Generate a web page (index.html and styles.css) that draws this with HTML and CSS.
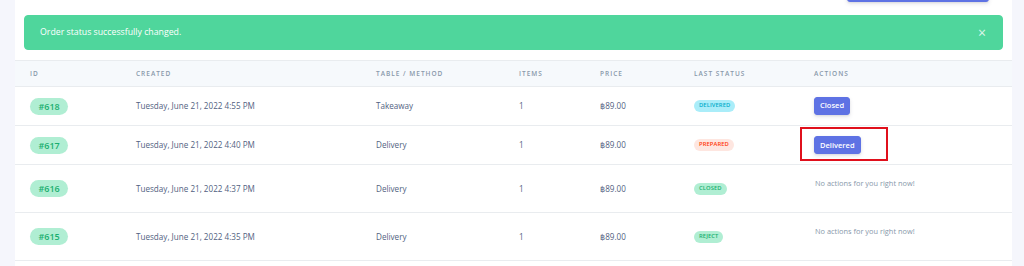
FILE: index.html
```html
<!DOCTYPE html>
<html lang="en">
<head>
    <meta charset="UTF-8">
    <meta name="viewport" content="width=device-width, initial-scale=1.0">
    <title>Orders</title>
    <link rel="stylesheet" href="styles.css">
</head>
<body>

<div class="page">
    <div class="card">
        <!-- Card header (scrolled mostly out of view) -->
        <div class="card-top">
            <button class="btn btn-primary btn-wide" aria-label="New order"></button>
        </div>

        <!-- Flash message -->
        <div class="alert alert-success">
            <span class="alert-text">Order status successfully changed.</span>
            <button class="close" aria-label="Close">&times;</button>
        </div>

        <table class="table">
            <colgroup>
                <col class="col-id">
                <col class="col-created">
                <col class="col-method">
                <col class="col-items">
                <col class="col-price">
                <col class="col-status">
                <col class="col-actions">
            </colgroup>
            <thead>
                <tr>
                    <th>ID</th>
                    <th>Created</th>
                    <th>Table / Method</th>
                    <th>Items</th>
                    <th>Price</th>
                    <th>Last Status</th>
                    <th>Actions</th>
                </tr>
            </thead>
            <tbody>
                <tr>
                    <td><span class="badge badge-id">#618</span></td>
                    <td>Tuesday, June 21, 2022 4:55 PM</td>
                    <td>Takeaway</td>
                    <td>1</td>
                    <td>฿89.00</td>
                    <td><span class="badge badge-info">Delivered</span></td>
                    <td><button class="btn btn-primary btn-sm">Closed</button></td>
                </tr>
                <tr>
                    <td><span class="badge badge-id">#617</span></td>
                    <td>Tuesday, June 21, 2022 4:40 PM</td>
                    <td>Delivery</td>
                    <td>1</td>
                    <td>฿89.00</td>
                    <td><span class="badge badge-warning">Prepared</span></td>
                    <td>
                        <span class="highlight">
                            <button class="btn btn-primary btn-sm">Delivered</button>
                        </span>
                    </td>
                </tr>
                <tr>
                    <td><span class="badge badge-id">#616</span></td>
                    <td>Tuesday, June 21, 2022 4:37 PM</td>
                    <td>Delivery</td>
                    <td>1</td>
                    <td>฿89.00</td>
                    <td><span class="badge badge-success">Closed</span></td>
                    <td><p class="no-actions">No actions for you right now!</p></td>
                </tr>
                <tr>
                    <td><span class="badge badge-id">#615</span></td>
                    <td>Tuesday, June 21, 2022 4:35 PM</td>
                    <td>Delivery</td>
                    <td>1</td>
                    <td>฿89.00</td>
                    <td><span class="badge badge-success">Reject</span></td>
                    <td><p class="no-actions">No actions for you right now!</p></td>
                </tr>
            </tbody>
        </table>
    </div>
</div>

</body>
</html>
```

FILE: styles.css
```css
body {
    margin: 0;
    padding: 0;
    font-family: "Open Sans", "DejaVu Sans", sans-serif;
    background-color: #f5f6fc;
    color: #525f7f;
}

.page {
    padding: 0 12px 0 15px;
}

.card {
    background-color: #fff;
    min-height: 266px;
}

.card-top {
    height: 15px;
    display: flex;
    justify-content: flex-end;
    align-items: flex-end;
    padding-right: 23px;
}

.btn {
    font-family: inherit;
    font-weight: 600;
    color: #fff;
    border: 1px solid #5e72e4;
    background-color: #5e72e4;
    border-radius: 3px;
    cursor: pointer;
    box-shadow: 0 2px 4px rgba(50, 50, 93, 0.11), 0 1px 2px rgba(0, 0, 0, 0.08);
}

.btn-wide {
    width: 142px;
    height: 20px;
    margin-bottom: 13px;
}

.btn-sm {
    display: inline-block;
    vertical-align: middle;
    font-size: 7.5px;
    line-height: 1.5;
    padding: 2.5px 5px;
}

/* Alert */
.alert {
    margin: 0 9px 10px 9px;
    padding: 10px 15px;
    border: 1px solid #4fd69c;
    border-radius: 4px;
    background-color: #4fd69c;
    color: #fff;
    font-size: 8.75px;
    line-height: 1.5;
    display: flex;
    justify-content: space-between;
    align-items: center;
}

.close {
    background: none;
    border: none;
    padding: 0 1px 0 0;
    color: #fff;
    opacity: 0.8;
    font-size: 14px;
    line-height: 13px;
    font-family: inherit;
    cursor: pointer;
}

/* Table */
.table {
    width: 100%;
    border-collapse: collapse;
    table-layout: fixed;
}

.col-id { width: 106px; }
.col-created { width: 240px; }
.col-method { width: 143px; }
.col-items { width: 81px; }
.col-price { width: 94px; }
.col-status { width: 120px; }

.table th {
    background-color: #f6f9fc;
    color: #8898aa;
    font-size: 6.5px;
    font-weight: 600;
    letter-spacing: 1px;
    text-transform: uppercase;
    text-align: left;
    padding: 7.5px 15px;
    line-height: 1.5;
    border-top: 1px solid #e9ecef;
    border-bottom: 1px solid #e9ecef;
}

.table td {
    font-size: 8.125px;
    line-height: 1;
    padding: 10px 15px;
    vertical-align: middle;
    border-top: 1px solid #e9ecef;
    white-space: nowrap;
}

.table tbody tr:last-child td {
    border-bottom: 1px solid #e9ecef;
}

/* Badges */
.badge {
    display: inline-block;
    vertical-align: middle;
    font-weight: 600;
    line-height: 1;
    text-transform: uppercase;
    border-radius: 10px;
}

.badge-id {
    font-size: 9px;
    padding: 4px 8.5px;
    background-color: #b0eed3;
    color: #1aae6f;
}

.badge-info,
.badge-warning,
.badge-success {
    font-size: 5.8px;
    padding: 3.2px 5px;
    letter-spacing: 0.1px;
}

.badge-info {
    background-color: #aaedf9;
    color: #03acca;
}

.badge-warning {
    background-color: #fee6e0;
    color: #ff3709;
}

.badge-success {
    background-color: #b0eed3;
    color: #1aae6f;
}

.no-actions {
    margin: 0 0 10px 1px;
    font-size: 7.4px;
    line-height: 17px;
    color: #8898aa;
    font-weight: 400;
}

/* Red annotation frame around the highlighted action */
.highlight {
    position: relative;
    display: inline-block;
    vertical-align: middle;
}

.highlight::after {
    content: "";
    position: absolute;
    left: -14px;
    top: -9px;
    right: -27px;
    bottom: -7px;
    border: 2px solid #e0101c;
}
```
